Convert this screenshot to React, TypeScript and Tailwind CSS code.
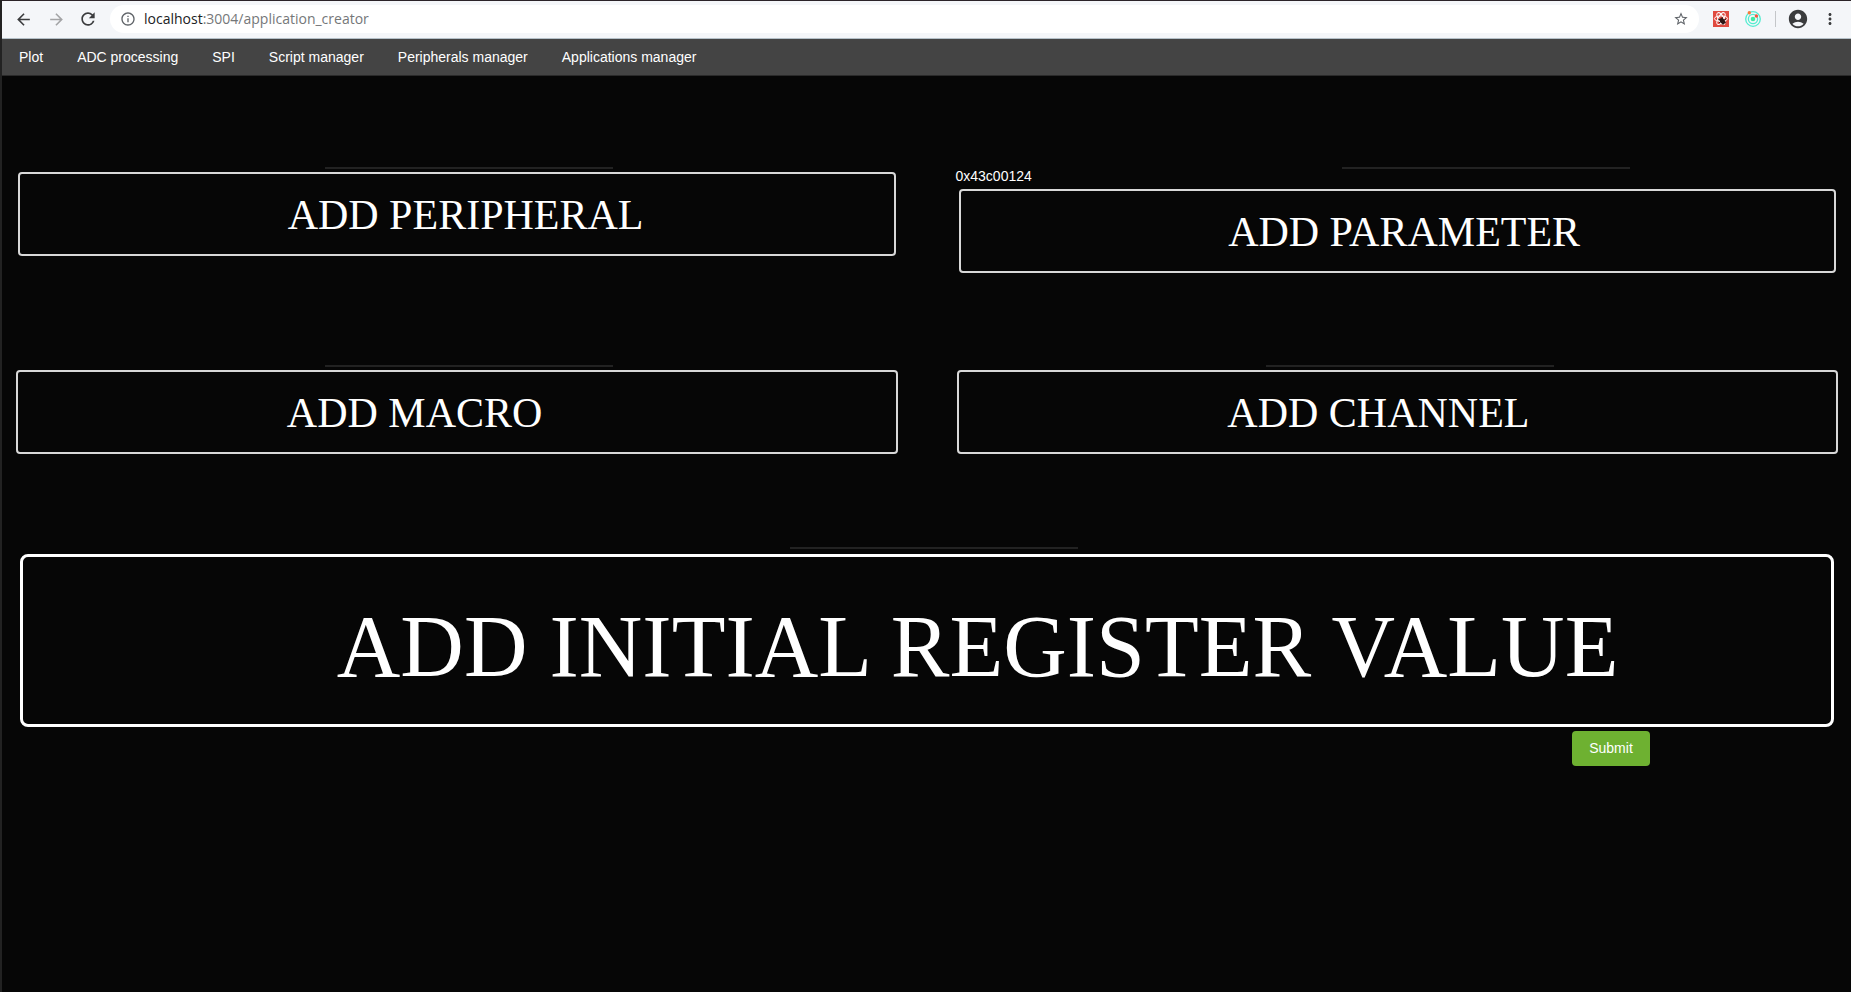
import React from "react";
import {
  MdArrowBack,
  MdArrowForward,
  MdRefresh,
  MdInfoOutline,
  MdStarBorder,
  MdAccountCircle,
  MdMoreVert,
} from "react-icons/md";

const links = [
  "Plot",
  "ADC processing",
  "SPI",
  "Script manager",
  "Peripherals manager",
  "Applications manager",
];

function ReactExtensionIcon() {
  return (
    <svg viewBox="0 0 16 16" className="size-4">
      <rect width="16" height="16" fill="#e04a40" />
      <g fill="none" stroke="#fff" strokeWidth="1">
        <ellipse cx="8" cy="7.6" rx="6.6" ry="2.7" />
        <ellipse cx="8" cy="7.6" rx="6.6" ry="2.7" transform="rotate(60 8 7.6)" />
        <ellipse cx="8" cy="7.6" rx="6.6" ry="2.7" transform="rotate(120 8 7.6)" />
      </g>
      <ellipse cx="9.4" cy="10" rx="2.3" ry="3.3" fill="#2b1514" transform="rotate(-40 9.4 10)" />
      <path d="M5 8l3 1M6 12l2-1.500M9 6l.5 2M13 8l-2 1M13 12l-2-1M10 14v-2" stroke="#2b1514" strokeWidth="1" />
    </svg>
  );
}

function OrbitExtensionIcon() {
  return (
    <svg viewBox="0 0 16 16" className="size-4">
      <g fill="none" stroke="#52ecd0">
        <circle cx="8" cy="8" r="7.300" strokeWidth="1.300" />
        <circle cx="8" cy="8" r="4.600" strokeWidth="1.300" />
      </g>
      <circle cx="8" cy="8" r="2.300" fill="#3fe9a4" />
      <circle cx="4.300" cy="1.700" r="1.700" fill="#f47c3c" />
      <circle cx="11.400" cy="5" r="1.700" fill="#f4573c" />
    </svg>
  );
}

function BrowserBar() {
  return (
    <header className="flex h-[39px] items-center border-t border-b border-t-[#2b2328] border-b-[#b4c0c8] bg-[#f4f6f9] px-3 pb-px text-[#3b3c3e]">
      <button aria-label="Back" className="mr-3.5">
        <MdArrowBack className="size-[19px]" />
      </button>
      <button aria-label="Forward" className="mr-3 text-[#a3a4a6]">
        <MdArrowForward className="size-[19px]" />
      </button>
      <button aria-label="Reload" className="mr-3">
        <MdRefresh className="size-5" />
      </button>
      <div className="flex h-7 flex-1 items-center rounded-full bg-white px-2.5">
        <MdInfoOutline className="mr-2 size-4 text-[#5f6368]" />
        <span className="flex-1 font-['Open_Sans','Noto_Sans',sans-serif] text-sm leading-5 text-[#757779]">
          <span className="text-[#202124]">localhost</span>:3004/application_creator
        </span>
        <button aria-label="Bookmark">
          <MdStarBorder className="size-4 text-[#5f6368]" />
        </button>
      </div>
      <button aria-label="React extension" className="ml-3.5">
        <ReactExtensionIcon />
      </button>
      <button aria-label="Orbit extension" className="ml-4">
        <OrbitExtensionIcon />
      </button>
      <span className="ml-3.5 h-4 w-px bg-[#c4c6c9]" />
      <button aria-label="Profile" className="ml-[11px]">
        <MdAccountCircle className="size-[22px]" />
      </button>
      <button aria-label="Menu" className="ml-3">
        <MdMoreVert className="size-[18px]" />
      </button>
    </header>
  );
}

function NavBar() {
  return (
    <nav className="flex h-[37px] items-center gap-[34px] border-b border-[#2a2a2a] bg-[#444] px-[17px] text-sm text-white">
      {links.map((label) => (
        <a key={label} href="#">
          {label}
        </a>
      ))}
    </nav>
  );
}

function AddButton({ label }: { label: string }) {
  return (
    <button className="mt-[3px] block h-[84px] w-full rounded border-2 border-[#d8d8d8] pt-0.5 pl-[30.5%] text-left font-['Liberation_Serif',serif] text-[42px] leading-[48px]">
      {label}
    </button>
  );
}

export default function App() {
  return (
    <div className="min-h-screen border-l-2 border-[#222] bg-[#060606] font-['Liberation_Sans',sans-serif] text-white">
      <BrowserBar />
      <NavBar />
      <main className="pt-[91px] pr-[13px] pl-3.5">
        <div className="grid grid-cols-2 gap-x-[59px]">
          <section className="h-[198px]">
            <hr className="ml-[35.1%] w-72 border-t-2 border-[#222]" />
            <div className="px-0.5">
              <AddButton label="ADD PERIPHERAL" />
            </div>
          </section>
          <section className="h-[198px]">
            <hr className="ml-[43.7%] w-72 border-t-2 border-[#222]" />
            <p className="-ml-px h-[17px] text-sm leading-[15px]">0x43c00124</p>
            <div className="px-0.5">
              <AddButton label="ADD PARAMETER" />
            </div>
          </section>
          <section className="h-[182px]">
            <hr className="ml-[35.1%] w-72 border-t-2 border-[#222]" />
            <AddButton label="ADD MACRO" />
          </section>
          <section className="h-[182px]">
            <hr className="ml-[35.1%] w-72 border-t-2 border-[#222]" />
            <AddButton label="ADD CHANNEL" />
          </section>
        </div>
        <hr className="ml-[42.5%] w-72 border-t-2 border-[#222]" />
        <div className="px-1 pt-[5px]">
          <button className="block h-[173px] w-full rounded-lg border-[3px] border-white pt-3 pl-[17.3%] text-left font-['Liberation_Serif',serif] text-[88px] leading-[100px] whitespace-nowrap">
            ADD INITIAL REGISTER VALUE
          </button>
        </div>
        <div className="mt-1 flex justify-end pr-[188px]">
          <button className="h-[35px] w-[78px] rounded bg-[#6eb131] pb-0.5 text-sm">Submit</button>
        </div>
      </main>
    </div>
  );
}
